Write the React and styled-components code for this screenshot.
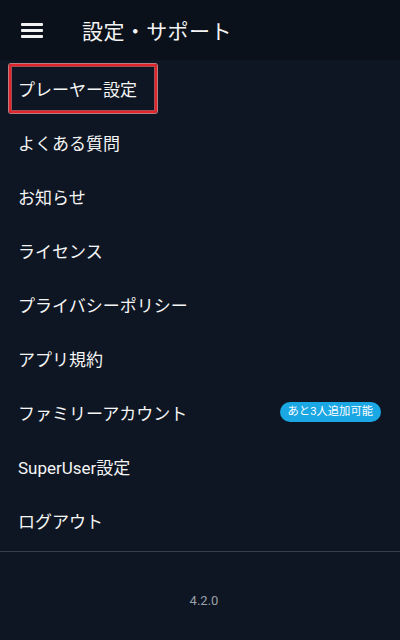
import React from "react";
import styled, { createGlobalStyle } from "styled-components";

const GlobalStyle = createGlobalStyle`
  html, body {
    margin: 0;
    padding: 0;
    background: #0e1623;
  }
  body {
    font-family: Roboto, "Noto Sans CJK JP", sans-serif;
    color: #ffffff;
  }
`;

const Page = styled.div`
  width: 400px;
  height: 640px;
  background: #0e1623;
  display: flex;
  flex-direction: column;
  overflow: hidden;
`;

const Header = styled.header`
  height: 60px;
  background: #0a111b;
  display: flex;
  align-items: center;
  padding-left: 21px;
  box-sizing: border-box;
`;

const MenuButton = styled.div`
  width: 22px;
  height: 15px;
  display: flex;
  flex-direction: column;
  justify-content: space-between;
  margin-right: 39px;

  span {
    display: block;
    height: 3px;
    background: #f2f2f2;
    border-radius: 1px;
  }
`;

const Title = styled.h1`
  margin: 0;
  font-size: 21px;
  font-weight: 400;
  letter-spacing: 0.4px;
  color: #f4f4f4;
`;

const List = styled.ul`
  list-style: none;
  margin: 0;
  padding: 1px 0 0;
`;

const Row = styled.li`
  height: 54px;
  display: flex;
  align-items: center;
  justify-content: space-between;
  padding: 0 19px 0 18px;
  font-size: 17px;
  color: #f5f5f5;
`;

const Label = styled.span`
  position: relative;

  ${(p) =>
    p.$highlight &&
    `
    &::after {
      content: "";
      position: absolute;
      left: -9px;
      top: -12px;
      width: 148px;
      height: 49px;
      box-sizing: border-box;
      border: 2px solid #e4242b;
      border-radius: 2px;
      box-shadow: 0 0 0 1px rgba(255, 170, 170, 0.7), inset 0 0 0 1px rgba(255, 120, 120, 0.6);
    }
  `}
`;

const Badge = styled.span`
  height: 20px;
  line-height: 20px;
  padding: 0 8px;
  border-radius: 10px;
  background: #1ba6e4;
  color: #ffffff;
  font-size: 11.3px;
`;

const Divider = styled.hr`
  margin: 4px 0 0;
  border: none;
  height: 1px;
  background: #343d4a;
`;

const Version = styled.div`
  text-align: center;
  padding-top: 41px;
  padding-left: 8px;
  font-size: 13px;
  color: #9aa0a8;
`;

const items = [
  { label: "プレーヤー設定", highlight: true },
  { label: "よくある質問" },
  { label: "お知らせ" },
  { label: "ライセンス" },
  { label: "プライバシーポリシー" },
  { label: "アプリ規約" },
  { label: "ファミリーアカウント", badge: "あと3人追加可能" },
  { label: "SuperUser設定" },
  { label: "ログアウト" },
];

export default function App() {
  return (
    <>
      <GlobalStyle />
      <Page>
        <Header>
          <MenuButton>
            <span />
            <span />
            <span />
          </MenuButton>
          <Title>設定・サポート</Title>
        </Header>
        <List>
          {items.map((item) => (
            <Row key={item.label}>
              <Label $highlight={item.highlight}>{item.label}</Label>
              {item.badge && <Badge>{item.badge}</Badge>}
            </Row>
          ))}
        </List>
        <Divider />
        <Version>4.2.0</Version>
      </Page>
    </>
  );
}
